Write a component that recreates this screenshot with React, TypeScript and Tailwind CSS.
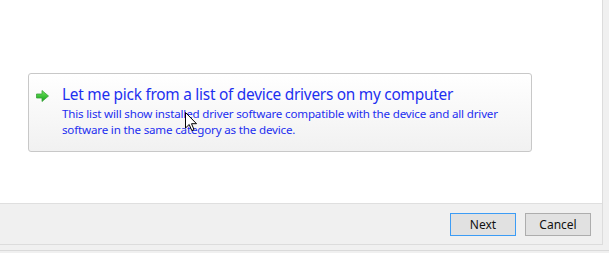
const font = { fontFamily: '"Segoe UI", "Noto Sans", "Open Sans", sans-serif' };

function GreenArrow() {
  return (
    <svg width="15" height="14" viewBox="0 0 15 14">
      <defs>
        <linearGradient id="ga" x1="0" y1="0" x2="0" y2="1">
          <stop offset="0" stopColor="#72e85e" />
          <stop offset="1" stopColor="#11a019" />
        </linearGradient>
      </defs>
      <path d="M1.5 5 H7 V1.5 L13.5 7 L7 12.5 V9 H1.5 Z" fill="url(#ga)" stroke="#3aa23a" strokeWidth="0.8" strokeLinejoin="round" />
    </svg>
  );
}

function Cursor() {
  return (
    <svg width="13" height="20" viewBox="0 0 13 20">
      <path d="M0.5 0.5 V16 L4.2 12.5 L6.8 18.6 L9 17.6 L6.5 11.7 L11.5 11.7 Z" fill="#fff" stroke="#000" strokeWidth="1" strokeLinejoin="miter" />
    </svg>
  );
}

export default function App() {
  return (
    <div className="relative w-[609px] h-[253px] overflow-hidden bg-[#f0f0f0]" style={font}>
      <div className="w-[603px] h-[245px] flex flex-col border-r border-b border-[#dcdcdc]">
        <div className="h-[203px] bg-white pt-[73px] pl-[28px]">
          <div className="w-[504px] h-[79px] rounded-[3px] border border-[#c8c8c8] bg-gradient-to-b from-white to-[#f1f1f1] flex">
            <div className="w-[33px] pl-[6px] pt-[15px]">
              <GreenArrow />
            </div>
            <div className="pt-[10px] text-[#1d2ff0]">
              <div className="text-[15.4px] leading-[21px] tracking-[-0.25px]">
                Let me pick from a list of device drivers on my computer
              </div>
              <div className="text-[11.6px] leading-[16px] mt-[1px] tracking-[-0.18px]">
                This list will show installed driver software compatible with the device and all driver
                <br />
                software in the same category as the device.
              </div>
            </div>
          </div>
        </div>
        <div className="flex-1 border-t border-[#dfdfdf] bg-[#f0f0f0] flex justify-end items-start gap-[9px] pt-[9px] pr-[11px]">
          <button className="w-[66px] h-[23px] border border-[#3c9cf5] bg-[#e1e1e1] text-[12px] text-[#111]">
            Next
          </button>
          <button className="w-[66px] h-[23px] border border-[#adadad] bg-[#e1e1e1] text-[12px] text-[#111]">
            Cancel
          </button>
        </div>
      </div>
      <div className="h-[5px]" />
      <div className="border-t border-[#dadada]" />
      <div className="absolute left-[185px] top-[112px]">
        <Cursor />
      </div>
    </div>
  );
}
